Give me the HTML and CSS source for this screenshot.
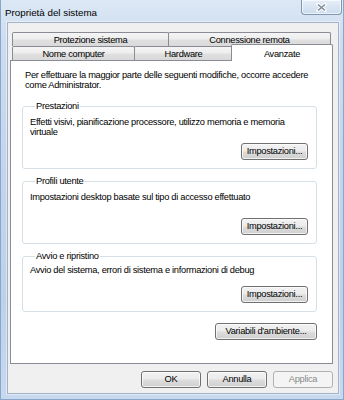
FILE: index.html
```html
<!DOCTYPE html>
<html lang="it">
<head>
<meta charset="utf-8">
<title>Proprietà del sistema</title>
<link rel="stylesheet" href="styles.css">
</head>
<body>
<div class="window">
  <div class="titlebar">
    <span class="title">Proprietà del sistema</span>
    <button class="close" aria-label="Chiudi">
      <svg width="11" height="9" viewBox="0 0 11 9">
        <path d="M2 1.5 L9 7.5 M9 1.5 L2 7.5" stroke="#ffffff" stroke-width="3.4" stroke-linecap="round"/>
        <path d="M2 1.5 L9 7.5 M9 1.5 L2 7.5" stroke="#7f8b99" stroke-width="1.6" stroke-linecap="butt"/>
      </svg>
    </button>
  </div>
  <div class="client">
    <div class="tabs">
      <div class="tabrow">
        <div class="tab t-prot">Protezione sistema</div>
        <div class="tab t-conn">Connessione remota</div>
      </div>
      <div class="tabrow">
        <div class="tab t-nome">Nome computer</div>
        <div class="tab t-hw">Hardware</div>
        <div class="tab t-adv active">Avanzate</div>
      </div>
    </div>
    <div class="panel">
      <p class="intro">Per effettuare la maggior parte delle seguenti modifiche, occorre accedere<br>come Administrator.</p>
      <div class="group g-perf">
        <div class="legend">Prestazioni</div>
        <p class="desc">Effetti visivi, pianificazione processore, utilizzo memoria e memoria<br>virtuale</p>
        <button class="btn btn-set">Impostazioni...</button>
      </div>
      <div class="group g-prof">
        <div class="legend">Profili utente</div>
        <p class="desc">Impostazioni desktop basate sul tipo di accesso effettuato</p>
        <button class="btn btn-set">Impostazioni...</button>
      </div>
      <div class="group g-boot">
        <div class="legend">Avvio e ripristino</div>
        <p class="desc">Avvio del sistema, errori di sistema e informazioni di debug</p>
        <button class="btn btn-set">Impostazioni...</button>
      </div>
      <button class="btn btn-env">Variabili d'ambiente...</button>
    </div>
    <div class="actions">
      <button class="btn btn-act">OK</button>
      <button class="btn btn-act">Annulla</button>
      <button class="btn btn-act" disabled>Applica</button>
    </div>
  </div>
</div>
</body>
</html>
```
FILE: styles.css
```css
* { box-sizing: border-box; }

body {
  margin: 0;
  width: 344px;
  height: 400px;
  overflow: hidden;
  font-family: "Liberation Sans", Arial, sans-serif;
  background: #c4d7ee;
}

.window {
  width: 344px;
  height: 400px;
  display: flex;
  flex-direction: column;
  padding-bottom: 5px;
  border: 1px solid #8aa6ca;
  border-top: none;
  background: linear-gradient(180deg, #dce8f5 0%, #cddcef 10%, #c2d5ec 45%, #bdd1ea 75%, #c6d9ef 100%);
}

.titlebar {
  height: 22px;
  flex: none;
  display: flex;
  align-items: flex-start;
  padding-left: 4px;
  padding-right: 1px;
}

.title {
  font-size: 9.8px;
  line-height: 12px;
  margin-top: 7px;
  color: #000;
}

.close {
  margin-left: auto;
  width: 41px;
  height: 15px;
  padding: 0;
  border: 1px solid #8196b2;
  border-top: none;
  border-radius: 0 0 4px 4px;
  background: linear-gradient(180deg, #e6eef8 0%, #d9e5f2 50%, #cbdbee 100%);
  box-shadow: inset 0 0 0 1px rgba(255, 255, 255, 0.65);
  display: flex;
  align-items: center;
  justify-content: center;
}

.close svg { display: block; }

.client {
  flex: 1;
  display: flex;
  flex-direction: column;
  margin: 0 4px 0 6px;
  padding: 9px 5px 5px 2px;
  background: #f0f0f0;
  border: 1px solid #a2b3c8;
  box-shadow: 0 0 0 1px rgba(255, 255, 255, 0.45);
  font-size: 9.3px;
  letter-spacing: -0.3px;
  color: #000;
}

.tabs {
  flex: none;
  padding-left: 2px;
}

.tabrow {
  display: flex;
  align-items: flex-start;
  height: 14px;
}

.tab {
  height: 14px;
  border: 1px solid #898c95;
  border-bottom: none;
  border-radius: 2px 2px 0 0;
  background: linear-gradient(180deg, #f5f5f5 0%, #ededed 48%, #e0e0e0 52%, #d9d9d9 100%);
  display: flex;
  align-items: center;
  justify-content: center;
  line-height: 12px;
  white-space: nowrap;
}

.t-prot { width: 157px; }
.t-conn { width: 163px; margin-left: -1px; }
.t-nome { width: 123px; }
.t-hw { width: 99px; margin-left: -1px; }

.tab.active {
  width: 102px;
  height: 17px;
  margin-left: -2px;
  margin-top: -2px;
  background: #fff;
  position: relative;
  z-index: 2;
  align-items: flex-start;
  padding-top: 3px;
}

.panel {
  flex: 1;
  display: flex;
  flex-direction: column;
  padding: 9px 15px 0 11px;
  background: #fff;
  border: 1px solid #898c95;
}

.intro,
.desc {
  margin: 0;
  line-height: 10px;
}

.intro { margin-left: 3px; }

.group {
  display: flex;
  flex-direction: column;
  padding: 0 8px 8px 7px;
  border: 1px solid #d5dfe5;
  border-radius: 3px;
}

.legend {
  align-self: flex-start;
  margin: -6px 0 0 5px;
  padding: 0 1px;
  line-height: 11px;
  background: #fff;
}

.g-perf { margin-top: 16px; }
.g-prof { margin-top: 12px; }
.g-boot { margin-top: 12px; }

.g-perf .desc, .g-prof .desc { margin-top: 5px; }
.g-boot .desc { margin-top: 3px; }

.btn {
  height: 17px;
  padding: 0;
  border: 1px solid #707070;
  border-radius: 3px;
  background: linear-gradient(180deg, #f2f2f2 0%, #ebebeb 48%, #dddddd 52%, #cfcfcf 100%);
  box-shadow: inset 0 0 0 1px rgba(255, 255, 255, 0.7);
  font-family: "Liberation Sans", Arial, sans-serif;
  font-size: 9.3px;
  letter-spacing: -0.3px;
  line-height: 15px;
  color: #000;
  white-space: nowrap;
}

.btn:disabled {
  border-color: #adb2b5;
  background: #f4f4f4;
  box-shadow: none;
  color: #8a8a8a;
}

.btn-set {
  align-self: flex-end;
  width: 67px;
}

.g-perf .btn-set { margin-top: 6px; }
.g-prof .btn-set { margin-top: 16px; }
.g-boot .btn-set { margin-top: 11px; }

.btn-env {
  align-self: flex-end;
  width: 102px;
  margin-top: 11px;
}

.actions {
  flex: none;
  display: flex;
  justify-content: flex-end;
  gap: 6px;
  margin-top: 7px;
}

.btn-act { width: 60px; }
```
